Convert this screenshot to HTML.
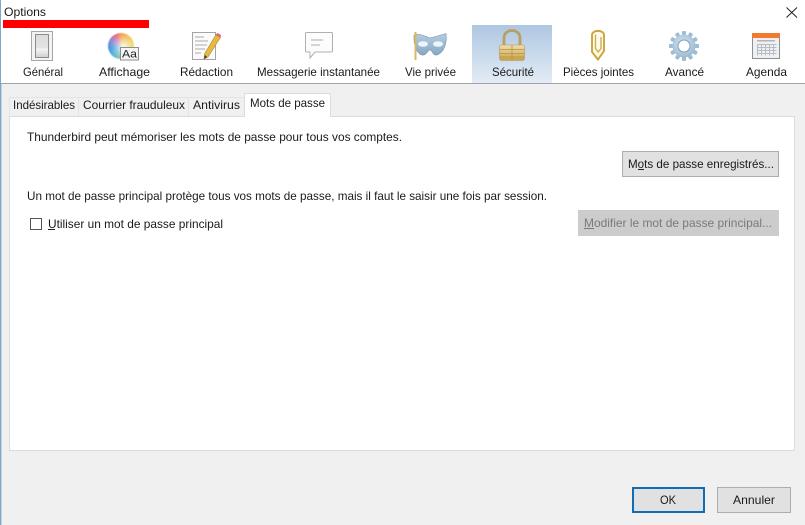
<!DOCTYPE html>
<html><head><meta charset="utf-8">
<style>
html,body{margin:0;padding:0;width:805px;height:525px;overflow:hidden;background:#f0f0f0}
svg{position:absolute;left:0;top:0}
text{font-family:"Liberation Sans",sans-serif;font-size:12px;fill:#1a1a1a}
.ic{filter:blur(.35px)}
#wheel{position:absolute;z-index:2;left:108px;top:33px;width:26px;height:26px;border-radius:50%;filter:blur(.4px);background:radial-gradient(circle at 55% 50%,rgba(255,255,255,.85) 0,rgba(255,255,255,.25) 45%,rgba(255,255,255,0) 70%),conic-gradient(#f09a45,#efd050 70deg,#d8e070 110deg,#90d080 170deg,#50b0e0 220deg,#3f95dd 260deg,#8a80d0 300deg,#e8608a 335deg,#f09a45)}
</style></head><body>
<svg width="805" height="525" viewBox="0 0 805 525" style="z-index:1">
<defs>
<linearGradient id="sel" x1="0" y1="0" x2="0" y2="1"><stop offset="0" stop-color="#aec6e1"/><stop offset="1" stop-color="#e3ecf6"/></linearGradient>
<linearGradient id="sw" x1="0" y1="0" x2="0" y2="1"><stop offset="0" stop-color="#dcdcdc"/><stop offset=".6" stop-color="#e4e4e4"/><stop offset=".62" stop-color="#f6f6f6"/><stop offset="1" stop-color="#cfcfcf"/></linearGradient>
<linearGradient id="gold" x1="0" y1="0" x2="0" y2="1"><stop offset="0" stop-color="#f0dfa8"/><stop offset="1" stop-color="#c9a04a"/></linearGradient>
<linearGradient id="mask" x1="0" y1="0" x2="0" y2="1"><stop offset="0" stop-color="#b4cee3"/><stop offset="1" stop-color="#86a8c4"/></linearGradient>
<radialGradient id="gear" cx=".45" cy=".4" r=".7"><stop offset="0" stop-color="#d8e6f2"/><stop offset="1" stop-color="#93b3cf"/></radialGradient>
</defs>
<rect x="0" y="0" width="805" height="83" fill="#fff"/>
<rect x="0" y="83" width="805" height="1" fill="#a2a2a2"/>
<rect x="0" y="0" width="1" height="525" fill="#7ea6c6"/>
<rect x="1" y="84" width="1" height="441" fill="#c4d4e2"/>
<rect x="3" y="20" width="146" height="8" fill="#fe0000"/>
<text x="4" y="16" textLength="42" lengthAdjust="spacingAndGlyphs">Options</text>
<path d="M786.500 7.500L797 17.500M797 7.500L786.500 17.500" stroke="#222" stroke-width="1" fill="none"/>

<rect x="472" y="25" width="80" height="58" fill="url(#sel)"/>

<g class="ic">
<!-- Général -->
<rect x="31.500" y="31.500" width="21" height="29" fill="#f3f3f3" stroke="#a6a6a6"/>
<rect x="35.500" y="34.500" width="13" height="23" fill="url(#sw)" stroke="#8c8c8c"/>

<!-- Rédaction -->
<rect x="192.500" y="32.500" width="23" height="27" fill="#fbfbfb" stroke="#a4a4a4"/>
<path d="M195 37H204M195 41H208M195 45H207M195 49H205M195 53H201" stroke="#a8a8a8" fill="none"/>
<path d="M216 34.500L220.500 37.500L208 57L204 59L204.500 54Z" fill="#e9b93f" stroke="#a88a3a" stroke-width=".6"/>
<path d="M215.500 35L217.500 33L221 35L220.500 38Z" fill="#dd6a6a"/>
<path d="M205 55L204 59L207 57Z" fill="#333"/>

<!-- Chat -->
<path d="M306.500 32.500H331.500C332 32.500 332.500 33 332.500 33.500V51C332.500 51.500 332 52 331.500 52H315L310 58V52H306.500C306 52 305.500 51.500 305.500 51V33.500C305.500 33 306 32.500 306.500 32.500Z" fill="#fcfcfc" stroke="#b0b0b0"/>
<path d="M311 40H323M311 45H320" stroke="#adadad" fill="none"/>

<!-- Mask -->
<path d="M414 35C421 33 426 37 430 38C434 37 441 35 446 33.500C447 42 445 52 437 55C433 56 432 50 430 50C428 50 426 56 422 55C416 53 413.500 44 414 35Z" fill="url(#mask)" stroke="#7892a8" stroke-width=".6"/>
<ellipse cx="423" cy="44" rx="5" ry="2.800" fill="#eef5fa"/>
<ellipse cx="438" cy="44" rx="5" ry="2.800" fill="#eef5fa"/>
<rect x="414.500" y="32" width="2" height="28" fill="#d8b860"/>

<!-- Lock -->
<path d="M504 45V38C504 28 520 28 520 38V45" fill="none" stroke="#b99f62" stroke-width="2.800"/>
<rect x="499.500" y="45" width="25" height="15.500" rx="2" fill="url(#gold)" stroke="#b0965c" stroke-width=".6"/>
<path d="M500 49.500H524M500 53.500H524M500 57H524M512 45V60" stroke="#b8924a" stroke-width=".8" fill="none"/>

<!-- Clip -->
<path d="M592 35C592 29.500 604 29.500 604 35V51L598 59.500L592 52Z" fill="#fff9e8" stroke="#c9a53f" stroke-width="1.900"/>
<path d="M595.500 34.500V48.500L598.200 52L601 48.500V37" fill="none" stroke="#cfae52" stroke-width="1.400"/>

<!-- Gear -->
<g transform="translate(684 46)">
<g fill="#9fbcd5">
<rect x="-2" y="-15" width="4" height="30" rx="1"/>
<rect x="-2" y="-15" width="4" height="30" rx="1" transform="rotate(30)"/>
<rect x="-2" y="-15" width="4" height="30" rx="1" transform="rotate(60)"/>
<rect x="-2" y="-15" width="4" height="30" rx="1" transform="rotate(90)"/>
<rect x="-2" y="-15" width="4" height="30" rx="1" transform="rotate(120)"/>
<rect x="-2" y="-15" width="4" height="30" rx="1" transform="rotate(150)"/>
</g>
<circle r="11.500" fill="url(#gear)"/>
<circle r="6" fill="#fff" stroke="#7f9db8"/>
</g>

<!-- Calendar -->
<rect x="752.500" y="33.500" width="27" height="25" fill="#f0f0f0" stroke="#8f8f8f"/>
<rect x="752" y="33" width="28" height="5" fill="#ef7a30"/>
<rect x="757" y="40" width="18" height="1.500" fill="#b5b5b5"/>
<path d="M757.500 44.500H776.500M757.500 47.500H776.500M757.500 50.500H776.500M757.500 53.500H776.500M757.500 44.500V55.500M761.500 44.500V55.500M765.500 44.500V55.500M769.500 44.500V55.500M773.500 44.500V55.500" stroke="#b4bcc8" fill="none"/>
</g>

<!-- Toolbar labels -->
<text x="23" y="76" textLength="40" lengthAdjust="spacingAndGlyphs">Général</text>
<text x="99" y="76" textLength="51" lengthAdjust="spacingAndGlyphs">Affichage</text>
<text x="180" y="76" textLength="53" lengthAdjust="spacingAndGlyphs">Rédaction</text>
<text x="257" y="76" textLength="123" lengthAdjust="spacingAndGlyphs">Messagerie instantanée</text>
<text x="405" y="76" textLength="51" lengthAdjust="spacingAndGlyphs">Vie privée</text>
<text x="492" y="76" textLength="42" lengthAdjust="spacingAndGlyphs">Sécurité</text>
<text x="563" y="76" textLength="71" lengthAdjust="spacingAndGlyphs">Pièces jointes</text>
<text x="665" y="76" textLength="39" lengthAdjust="spacingAndGlyphs">Avancé</text>
<text x="746" y="76" textLength="41" lengthAdjust="spacingAndGlyphs">Agenda</text>

<!-- Tabs -->
<rect x="9.500" y="97.500" width="69" height="19" fill="#f0f0f0" stroke="#e4e4e4"/>
<rect x="78.500" y="97.500" width="110" height="19" fill="#f0f0f0" stroke="#e4e4e4"/>
<rect x="188.500" y="97.500" width="56" height="19" fill="#f0f0f0" stroke="#e4e4e4"/>

<!-- Panel -->
<rect x="9.500" y="116.500" width="785" height="334" fill="#fff" stroke="#dcdcdc"/>
<path d="M244.500 116.500V93.500H330.500V116.500" fill="#fff" stroke="#dcdcdc"/>
<rect x="245" y="114" width="85" height="4" fill="#fff"/>

<text x="13" y="109" textLength="62" lengthAdjust="spacingAndGlyphs">Indésirables</text>
<text x="83" y="109" textLength="102" lengthAdjust="spacingAndGlyphs">Courrier frauduleux</text>
<text x="193" y="109" textLength="47" lengthAdjust="spacingAndGlyphs">Antivirus</text>
<text x="250" y="107" textLength="75" lengthAdjust="spacingAndGlyphs">Mots de passe</text>

<!-- Content -->
<text x="27" y="141" textLength="375" lengthAdjust="spacingAndGlyphs">Thunderbird peut mémoriser les mots de passe pour tous vos comptes.</text>
<text x="27" y="200" textLength="520" lengthAdjust="spacingAndGlyphs">Un mot de passe principal protège tous vos mots de passe, mais il faut le saisir une fois par session.</text>

<rect x="30.500" y="218.500" width="11" height="11" fill="#fff" stroke="#555"/>
<text x="48" y="228" textLength="175" lengthAdjust="spacingAndGlyphs">Utiliser un mot de passe principal</text>
<rect x="48" y="229" width="7" height="1" fill="#222"/>

<rect x="622.500" y="151.500" width="156" height="25" fill="#e1e1e1" stroke="#adadad"/>
<text x="628" y="168" textLength="146" lengthAdjust="spacingAndGlyphs">Mots de passe enregistrés...</text>
<rect x="638" y="169" width="6" height="1" fill="#222"/>

<rect x="578" y="210" width="201" height="26" fill="#cccccc"/>
<text x="584" y="227" textLength="188" lengthAdjust="spacingAndGlyphs" style="fill:#7a7a7a">Modifier le mot de passe principal...</text>
<rect x="584" y="228" width="10" height="1" fill="#7a7a7a"/>

<!-- Buttons -->
<rect x="633" y="488" width="71" height="24" fill="#e1e1e1" stroke="#0f6cb5" stroke-width="2"/>
<text x="660" y="504" textLength="16" lengthAdjust="spacingAndGlyphs">OK</text>
<rect x="717.500" y="487.500" width="73" height="25" fill="#e1e1e1" stroke="#adadad"/>
<text x="733" y="504" textLength="42" lengthAdjust="spacingAndGlyphs">Annuler</text>
</svg>
<div id="wheel"></div>
<svg width="805" height="525" viewBox="0 0 805 525" style="z-index:3">
<rect x="120.500" y="47.500" width="18" height="12.500" fill="#f5f5f5" stroke="#8d8d8d"/>
<text x="122" y="57.500" textLength="15" lengthAdjust="spacingAndGlyphs" style="font-size:11px;fill:#222">Aa</text>
</svg>
</body></html>
